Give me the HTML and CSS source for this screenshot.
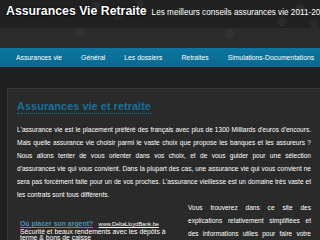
FILE: index.html
```html
<!DOCTYPE html>
<html lang="fr">
<head>
<meta charset="utf-8">
<title>Assurances Vie Retraite</title>
<link rel="stylesheet" href="styles.css">
</head>
<body>
<header class="masthead">
  <div class="brand">
    <span class="site-title">Assurances Vie Retraite</span>
    <span class="tagline">Les meilleurs conseils assurances vie 2011-2012</span>
  </div>
  <div class="band"></div>
</header>
<nav class="nav">
  <a class="nav-item">Assurances vie</a>
  <a class="nav-item">Général</a>
  <a class="nav-item">Les dossiers</a>
  <a class="nav-item">Retraites</a>
  <a class="nav-item">Simulations-Documentations</a>
</nav>
<main class="page">
  <article class="box">
    <h1 class="title">Assurances vie et retraite</h1>
    <p class="intro">
      <span class="ln">L'assurance vie est le placement préféré des français avec plus de 1300 Milliards d'euros d'encours.</span>
      <span class="ln">Mais quelle assurance vie choisir parmi le vaste choix que propose les banques et les assureurs ?</span>
      <span class="ln">Nous allons tenter de vous orienter dans vos choix, et de vous guider pour une sélection</span>
      <span class="ln">d'assurances vie qui vous convient. Dans la plupart des cas, une assurance vie qui vous convient ne</span>
      <span class="ln">sera pas forcément faite pour un de vos proches. L'assurance vieillesse est un domaine très vaste et</span>
      <span class="ln last">les contrats sont tous différents.</span>
    </p>
    <div class="cols">
      <div class="ad">
        <p class="ad-head"><a class="ad-title">Où placer son argent?</a> <a class="ad-url">www.DeltaLloydBank.be</a></p>
        <p class="ad-text">Sécurité et beaux rendements avec les dépôts à terme &amp; bons de caisse</p>
      </div>
      <p class="side">
        <span class="ln">Vous trouverez dans ce site des</span>
        <span class="ln">explications relativement simplifiées et</span>
        <span class="ln">des informations utiles pour faire votre</span>
        <span class="ln last">choix.</span>
      </p>
    </div>
  </article>
</main>
</body>
</html>
```

FILE: styles.css
```css
html, body {
  margin: 0;
  padding: 0;
}

body {
  width: 320px;
  height: 240px;
  overflow: hidden;
  background: #1f1f1f;
  font-family: "Liberation Sans", Arial, sans-serif;
  color: #fff;
}

.masthead {
  background:
    radial-gradient(circle at 96px 6px, rgba(255,255,255,0.05) 0 4px, transparent 5px),
    radial-gradient(circle at 118px 14px, rgba(255,255,255,0.04) 0 5px, transparent 6px),
    radial-gradient(circle at 140px 4px, rgba(255,255,255,0.05) 0 3px, transparent 4px),
    radial-gradient(circle at 300px 10px, rgba(255,255,255,0.05) 0 5px, transparent 6px),
    radial-gradient(circle at 282px 22px, rgba(255,255,255,0.04) 0 4px, transparent 5px),
    radial-gradient(circle at 314px 24px, rgba(255,255,255,0.04) 0 4px, transparent 5px),
    #212121;
}

.brand {
  height: 28px;
  box-sizing: border-box;
  padding: 3px 0 0 6px;
  display: flex;
  align-items: baseline;
  gap: 5px;
  white-space: nowrap;
  overflow: hidden;
}

.site-title {
  font-size: 12.3px;
  line-height: 17px;
  font-weight: bold;
  color: #fff;
  text-shadow: 0 0 2px #000, 0 1px 1px #000;
}

.tagline {
  font-size: 8.2px;
  color: #fff;
}

.band {
  height: 20px;
  background:
    radial-gradient(circle at 80px 4px, rgba(255,255,255,0.03) 0 4px, transparent 5px),
    radial-gradient(circle at 230px 6px, rgba(255,255,255,0.03) 0 4px, transparent 5px),
    #2b2b2b;
}

.nav {
  height: 19px;
  display: flex;
  align-items: center;
  gap: 19px;
  padding-left: 16px;
  background: linear-gradient(#0d76a0, #07698f);
  white-space: nowrap;
}

.nav-item {
  font-size: 6.8px;
  line-height: 19px;
  color: #fff;
}

.page {
  padding-top: 21px;
}

.box {
  width: 294px;
  margin-left: 7px;
  padding: 11px 9px 0 9px;
  border: 1px solid #383838;
  background: #2a2a2a;
}

.title {
  display: block;
  width: fit-content;
  margin: 0;
  font-size: 11px;
  line-height: 13px;
  font-weight: bold;
  color: #17709a;
  border-bottom: 1px dotted #17709a;
}

.intro {
  margin: 9px 0 0;
  font-size: 6.55px;
  line-height: 13px;
  text-align: justify;
}

.ln {
  display: block;
  text-align: justify;
  text-align-last: justify;
}

.ln.last {
  text-align-last: left;
}

.cols {
  display: flex;
}

.ad {
  flex: 0 0 155px;
  margin: 16px 13px 0 3px;
}

.ad-head {
  margin: 0;
  line-height: 7.5px;
  white-space: nowrap;
}

.ad-title {
  font-size: 6.9px;
  font-weight: bold;
  color: #4694bb;
  text-decoration: underline;
}

.ad-url {
  font-size: 5.6px;
  color: #fff;
  text-decoration: underline;
  margin-left: 1px;
}

.ad-text {
  margin: 0;
  font-size: 6.8px;
  line-height: 6.7px;
  color: #fff;
}

.side {
  flex: 1;
  margin: 0;
  font-size: 6.55px;
  line-height: 13px;
}
```
